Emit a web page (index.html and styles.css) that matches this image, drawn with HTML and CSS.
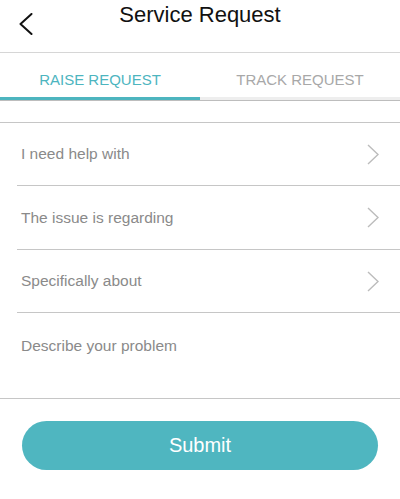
FILE: index.html
```html
<!DOCTYPE html>
<html lang="en">
<head>
    <meta charset="UTF-8">
    <meta name="viewport" content="width=device-width, initial-scale=1.0">
    <title>Service Request</title>
    <link rel="stylesheet" href="styles.css">
</head>
<body>
    <header class="top-bar">
        <button class="back-button" aria-label="Back">
            <svg width="14" height="22" viewBox="0 0 14 22">
                <polyline points="12.5,1 1.5,11 12.5,21" fill="none" stroke="#111" stroke-width="2" stroke-linecap="round" stroke-linejoin="round"/>
            </svg>
        </button>
        <h1 class="title">Service Request</h1>
        <span></span>
    </header>

    <nav class="tabs">
        <div class="tab active">RAISE REQUEST</div>
        <div class="tab">TRACK REQUEST</div>
    </nav>

    <div class="form-list">
        <div class="select-row">
            <span>I need help with</span>
            <svg class="chevron" width="12" height="21" viewBox="0 0 12 21">
                <polyline points="1,1 11,10.5 1,20" fill="none" stroke="#bcbcbc" stroke-width="1.4"/>
            </svg>
        </div>
        <div class="select-row tall">
            <span>The issue is regarding</span>
            <svg class="chevron" width="12" height="21" viewBox="0 0 12 21">
                <polyline points="1,1 11,10.5 1,20" fill="none" stroke="#bcbcbc" stroke-width="1.4"/>
            </svg>
        </div>
        <div class="select-row">
            <span>Specifically about</span>
            <svg class="chevron" width="12" height="21" viewBox="0 0 12 21">
                <polyline points="1,1 11,10.5 1,20" fill="none" stroke="#bcbcbc" stroke-width="1.4"/>
            </svg>
        </div>
        <textarea class="problem-text" placeholder="Describe your problem"></textarea>
    </div>

    <button class="submit-button">Submit</button>
</body>
</html>
```

FILE: styles.css
```css
body {
    margin: 0;
    font-family: 'Liberation Sans', Arial, sans-serif;
    background-color: #ffffff;
    color: #111;
}
.top-bar {
    display: grid;
    grid-template-columns: 1fr auto 1fr;
    height: 52px;
    border-bottom: 1px solid #d6d6d6;
}
.back-button {
    justify-self: start;
    align-self: start;
    margin: 13px 0 0 19px;
    padding: 0;
    border: none;
    background: none;
    line-height: 0;
    cursor: pointer;
}
.title {
    margin: 0;
    font-size: 22px;
    font-weight: normal;
    line-height: 30px;
    color: #111;
}
.tabs {
    display: flex;
    border-bottom: 1px solid #bdbdbd;
}
.tab {
    flex: 1;
    box-sizing: border-box;
    height: 47px;
    padding-top: 18px;
    font-size: 15px;
    line-height: 18px;
    text-align: center;
    color: #a8a8a8;
    border-bottom: 3px solid #eeeeee;
}
.tab.active {
    color: #4db5bf;
    border-bottom-color: #4db5bf;
}
.form-list {
    margin-top: 21px;
    border-top: 1px solid #c6c6c6;
}
.select-row {
    display: flex;
    align-items: center;
    justify-content: space-between;
    height: 62px;
    margin-left: 17px;
    padding: 0 21px 0 4px;
    border-bottom: 1px solid #c6c6c6;
    font-size: 15.5px;
    color: #8a8a8a;
}
.select-row.tall {
    height: 63px;
}
.problem-text {
    display: block;
    box-sizing: border-box;
    width: 100%;
    height: 86px;
    padding: 24px 21px 0;
    border: none;
    border-bottom: 1px solid #c6c6c6;
    resize: none;
    outline: none;
    font-family: 'Liberation Sans', Arial, sans-serif;
    font-size: 15.5px;
    line-height: 18px;
    color: #555;
}
.problem-text::placeholder {
    color: #8a8a8a;
}
.submit-button {
    display: block;
    width: calc(100% - 44px);
    height: 49px;
    margin: 22px 22px 0;
    border: none;
    border-radius: 25px;
    background-color: #4fb6c0;
    color: #ffffff;
    font-family: 'Liberation Sans', Arial, sans-serif;
    font-size: 20px;
    cursor: pointer;
}
```
